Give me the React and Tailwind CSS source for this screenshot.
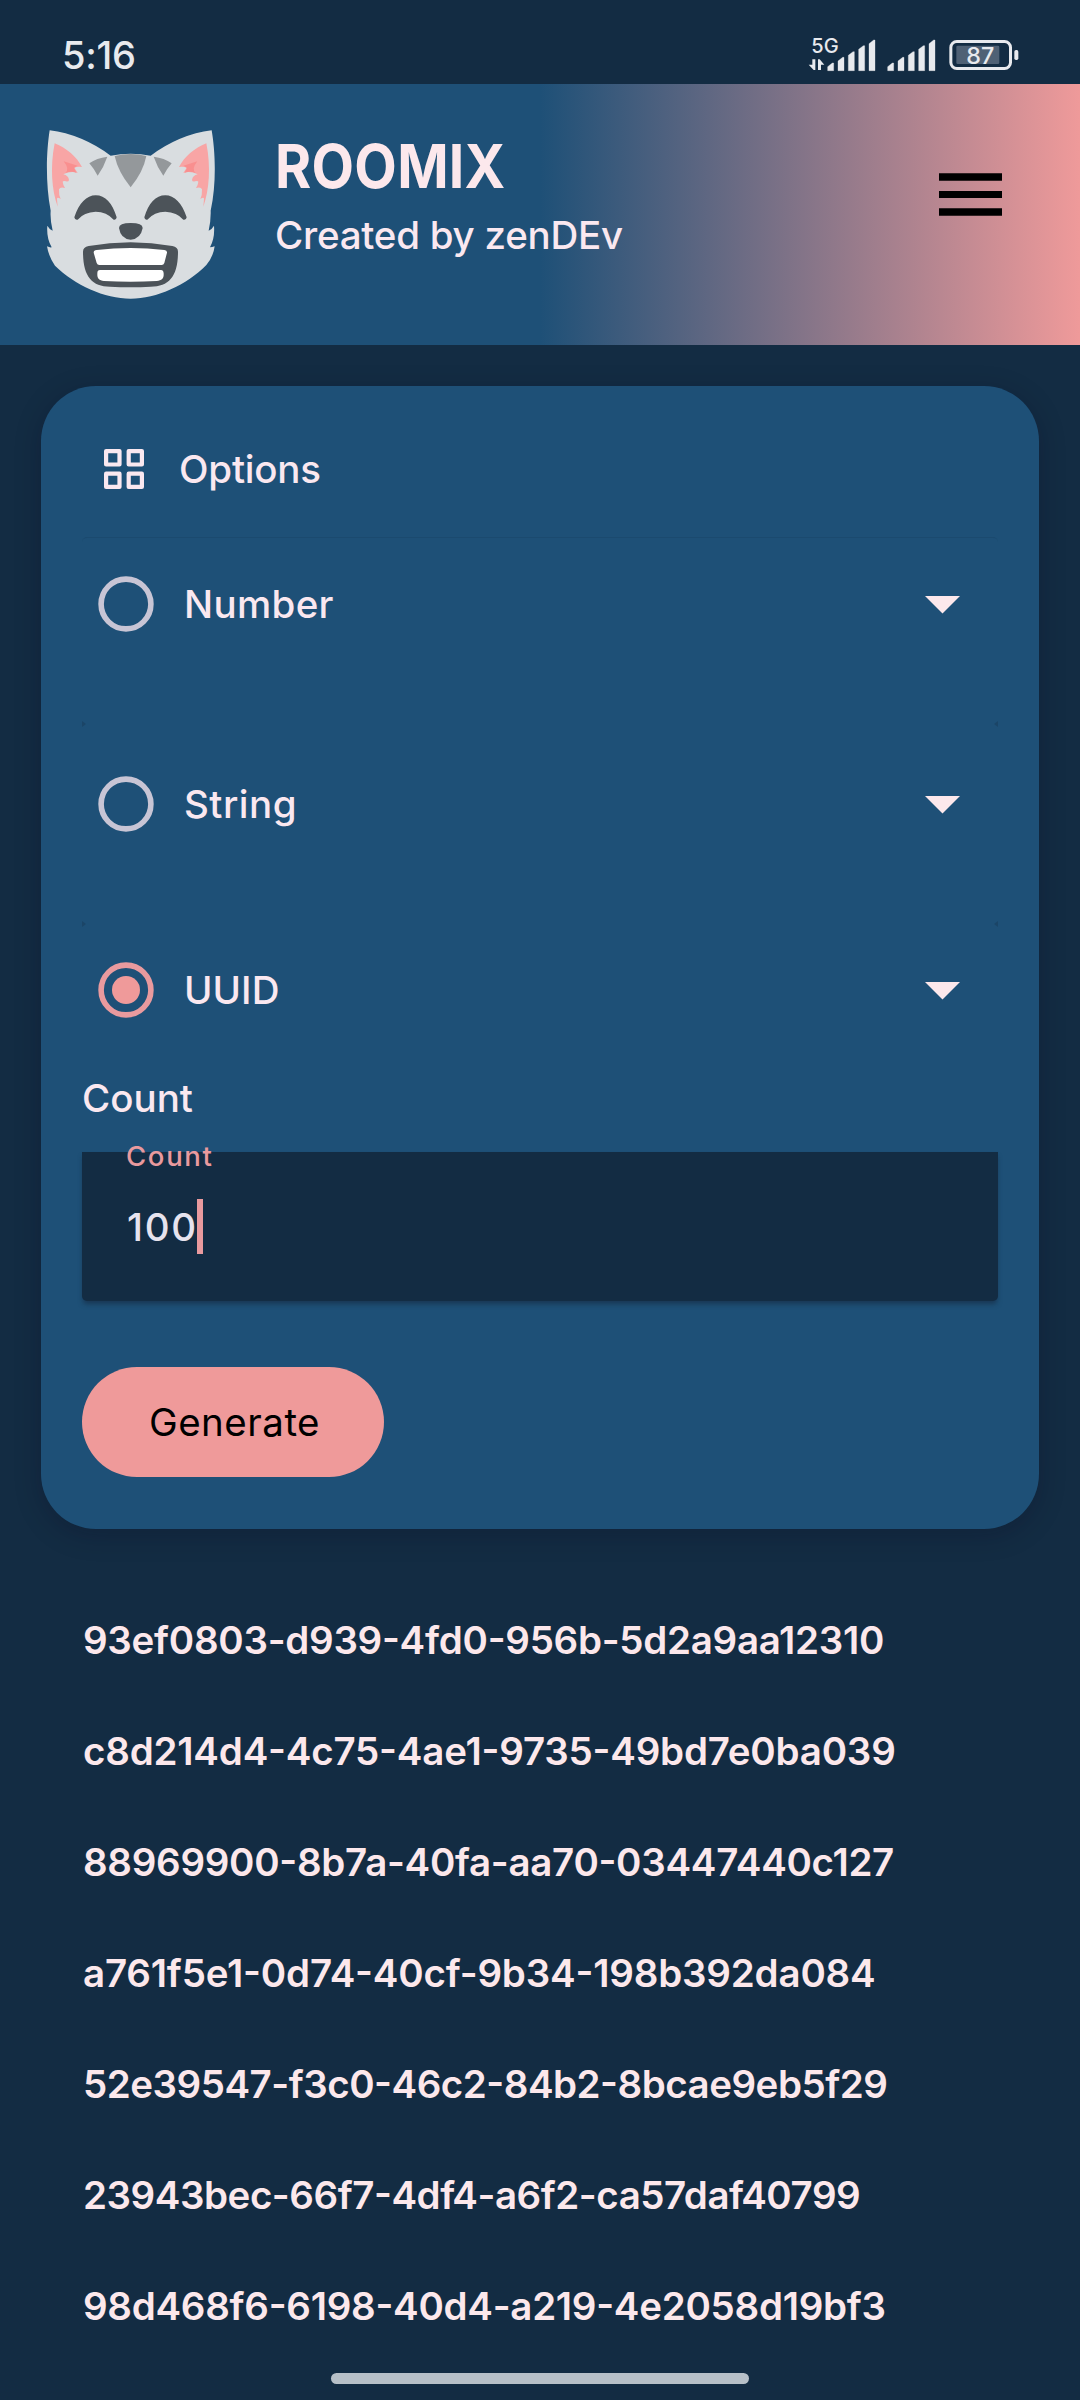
import React from "react";

const results = [
  { id: "93ef0803-d939-4fd0-956b-5d2a9aa12310", tracking: "tracking-[-0.27px]" },
  { id: "c8d214d4-4c75-4ae1-9735-49bd7e0ba039", tracking: "tracking-[-0.2px]" },
  { id: "88969900-8b7a-40fa-aa70-03447440c127", tracking: "tracking-[-0.29px]" },
  { id: "a761f5e1-0d74-40cf-9b34-198b392da084", tracking: "tracking-[-0.18px]" },
  { id: "52e39547-f3c0-46c2-84b2-8bcae9eb5f29", tracking: "tracking-[-0.48px]" },
  { id: "23943bec-66f7-4df4-a6f2-ca57daf40799", tracking: "tracking-[-0.45px]" },
  { id: "98d468f6-6198-40d4-a219-4e2058d19bf3", tracking: "tracking-[-0.27px]" },
];

function SignalBars({ x }) {
  const tops = [129, 112, 95, 77, 60];
  return tops.map((top, i) => (
    <path
      key={top}
      d={`M${x + i * 31} ${top + 11} L${x + 14 + i * 31} ${top} H${x + 18 + i * 31} V152 H${x + i * 31} Z`}
      fill="#e8eaee"
      stroke="#e8eaee"
      strokeWidth="1"
      strokeLinejoin="round"
    />
  ));
}

function StatusIcons() {
  return (
    <svg width="213" height="44" viewBox="140 27 639 132" className="block">
      <text x="153" y="98" fontSize="61" fontWeight="500" fill="#e8eaee" textLength="82" lengthAdjust="spacingAndGlyphs">5G</text>
      <path d="M156 118 H165 V150 H160 L145 134 H156 Z" fill="#e8eaee" />
      <path d="M173 118 H178 L192 134 H182 V150 H173 Z" fill="#e8eaee" />
      <SignalBars x={202} />
      <SignalBars x={382} />
      <rect x="571.5" y="64.5" width="179" height="81" rx="18" fill="none" stroke="#e8eaee" strokeWidth="9" />
      <rect x="588" y="77" width="129" height="55" rx="4" fill="#4f6175" />
      <rect x="762" y="90" width="12" height="30" rx="5" fill="#e8eaee" />
      <text x="618" y="131" fontSize="67" fontWeight="500" fill="#e8eaee" textLength="84" lengthAdjust="spacingAndGlyphs">87</text>
    </svg>
  );
}

function CatEar() {
  return (
    <>
      <path d="M164 430 C200 445 230 470 246 501 Q232 499 223 503 L233 519 Q212 512 190 523 Q205 526 207 540 Q206 546 198 544 Q190 541 188 545 Q189 555 195 564 Q180 560 177 568 Q176 585 182 597 Q171 590 171 597 L173 620 C155 570 150 500 164 430 Z" fill="#f8a5a5" />
      <path d="M191 484 L233 497 Q222 502 222 504 L229 518 Q214 512 196 519 Q210 508 191 484 Z" fill="#f98f8f" />
      <path d="M268 490 Q290 474 322 470 Q312 500 293 527 Q282 506 268 490 Z" fill="#94989b" />
      <path d="M223 652 C237 609 260 586 287 586 C316 586 337 609 350 652 Q349 661 341 659 Q320 635 287 635 Q252 636 233 659 Q224 661 223 652 Z" fill="#4c5359" />
    </>
  );
}

function CatLogo() {
  return (
    <svg width="172" height="172" viewBox="138 387 516 516" className="block shrink-0">
      <path
        d="M149 391 Q245 403 332 467 Q392 456 452 467 Q539 403 635 391 C646 455 650 550 632 632 Q633 660 626 692 Q636 688 642 677 Q645 715 630 742 Q636 742 644 739 Q640 770 619 795 C560 855 470 896 392 896 C314 896 224 855 165 797 Q146 770 141 739 Q149 743 155 742 Q139 715 142 677 Q148 688 158 692 Q150 660 152 632 C136 550 139 455 149 391 Z"
        fill="#d9dde0"
      />
      <CatEar />
      <g transform="translate(783 0) scale(-1 1)">
        <CatEar />
      </g>
      <path d="M344 468 Q392 456 439 468 Q430 515 392 562 Q354 515 344 468 Z" fill="#94989b" />
      <path d="M357 684 Q357 669 392 669 Q428 669 428 684 Q422 717 392 719 Q362 717 357 684 Z" fill="#4c5359" />
      <path d="M249 755 Q249 741 266 738 Q392 716 517 738 Q534 741 534 755 C534 828 508 860 452 860 Q392 863 330 860 C275 860 249 828 249 755 Z" fill="#4c5359" />
      <path d="M281 758 Q281 751 290 750 Q392 738 493 750 Q502 751 501 758 L493 789 Q491 795 485 795 H298 Q292 795 290 789 Z" fill="#fff" />
      <path d="M292 820 Q292 810 300 810 H483 Q490 810 491 820 C492 837 485 841 470 843 Q392 847 312 843 C298 841 291 837 292 820 Z" fill="#fff" />
    </svg>
  );
}

function MenuIcon() {
  return (
    <svg width="63" height="43" viewBox="0 0 63 43" className="block">
      <path d="M0 .3H63V7.7H0Z M0 18H63V25H0Z M0 35.3H63V42.7H0Z" fill="#000" />
    </svg>
  );
}

function GridIcon() {
  return (
    <svg width="40" height="40" viewBox="0 0 40 40" fill="none" stroke="#fae8f0" strokeWidth="4.2" strokeLinejoin="round" className="block">
      <rect x="2.1" y="2.1" width="13.4" height="13.4" />
      <rect x="24.7" y="2.1" width="13.2" height="13.4" />
      <rect x="2.1" y="24.7" width="13.4" height="13.2" />
      <rect x="24.7" y="24.7" width="13.2" height="13.2" />
    </svg>
  );
}

function Radio({ selected }) {
  return (
    <svg width="56" height="56" viewBox="0 0 56 56" className="block shrink-0">
      <circle cx="28" cy="28" r="24.9" fill="none" stroke={selected ? "#e99a9e" : "#c8c5d5"} strokeWidth="5.6" />
      {selected && <circle cx="28" cy="28" r="14" fill="#ef9a9a" />}
    </svg>
  );
}

function OptionRow({ label, selected, className }) {
  return (
    <div className={`flex items-center pl-4 pr-[38px] ${className}`}>
      <Radio selected={selected} />
      <span className="ml-[30px] flex-1">{label}</span>
      <svg width="35" height="18" viewBox="0 0 35 18" className="mt-[2px] block">
        <path d="M0 0 H35 L17.5 17.5 Z" fill="#fce8ec" />
      </svg>
    </div>
  );
}

function SectionSeam() {
  return (
    <div className="flex h-0 items-center justify-between">
      <svg width="4" height="6" viewBox="0 0 4 6"><path d="M0 0 L4 3 L0 6 Z" fill="#1b4567" /></svg>
      <svg width="4" height="6" viewBox="0 0 4 6"><path d="M4 0 L0 3 L4 6 Z" fill="#1b4567" /></svg>
    </div>
  );
}

export default function App() {
  return (
    <div className="flex h-[2400px] w-[1080px] flex-col overflow-hidden bg-[#132c43] font-['Inter',sans-serif] text-[38.5px] leading-10 font-medium text-[#fae8f0]">
      <div className="flex h-[84px] shrink-0 items-start justify-between pr-[60px] pl-[62px]">
        <span className="mt-[35px] text-[38px] tracking-[-0.26px] text-[#e8eaee]">5:16</span>
        <div className="mt-[29px]">
          <StatusIcons />
        </div>
      </div>

      <header className="flex h-[261px] shrink-0 items-start bg-[linear-gradient(90deg,#1e5077_50%,#ef9a9a_100%)] pt-[45px] pr-[78px] pl-[46px]">
        <CatLogo />
        <div className="mt-[7px] ml-[57px] flex-1">
          <h1 className="origin-left scale-x-[0.92] text-[60px] leading-[60px] font-bold tracking-[0.3px] text-[#fce8ec]">ROOMIX</h1>
          <p className="mt-[19px] tracking-[-0.24px]">Created by zenDEv</p>
        </div>
        <button className="mt-11" aria-label="Menu">
          <MenuIcon />
        </button>
      </header>

      <main className="pt-[41px]">
        <section className="mx-[41px] h-[1143px] rounded-[55px] bg-[#1e5077] px-[41px] pt-[41px] shadow-[0_6px_26px_rgba(10,8,30,0.25)]">
          <div className="flex h-[84px] items-center gap-[35px] pl-[22px]">
            <GridIcon />
            <span className="tracking-[-0.2px]">Options</span>
          </div>
          <div className="mt-[26px] rounded-t-[5px] border-t border-[#1b4a6f]">
            <OptionRow label="Number" className="-mt-px h-[134px] tracking-[0.34px]" />
          </div>
          <div className="h-[53px]" />
          <SectionSeam />
          <OptionRow label="String" className="h-[160px] tracking-[0.5px]" />
          <div className="h-10" />
          <SectionSeam />
          <OptionRow label="UUID" selected className="h-[132px] tracking-[0.05px]" />
          <div className="mt-[22px]">Count</div>
          <div className="relative mt-[34px] flex h-[149px] items-center rounded-b-[5px] bg-[#132c43] pl-[45px] shadow-[0_4px_5px_-1px_rgba(20,35,55,0.55)]">
            <span className="absolute -top-[10px] left-[44px] text-[27.5px] leading-7 tracking-[1.68px] text-[#e99a9e]">Count</span>
            <span className="tracking-[1.7px] text-[#e6e3ee]">100</span>
            <span className="-ml-px h-[55px] w-[6px] bg-[#e99a9e]" />
          </div>
          <button className="mt-[66px] flex h-[110px] w-[302px] items-center justify-center rounded-full bg-[#ef9a9a] pl-[3px] font-normal tracking-[0.5px] text-black">
            Generate
          </button>
        </section>

        <ul className="mt-[55px] pl-[83px] font-semibold text-[#fce8ec] [font-feature-settings:'calt'_1]">
          {results.map(({ id, tracking }) => (
            <li key={id} className={`flex h-[111px] items-center whitespace-nowrap ${tracking}`}>{id}</li>
          ))}
        </ul>
      </main>

      <div className="mx-auto mt-[12px] h-[11px] w-[418px] shrink-0 rounded-full bg-[#b7c0c8]" />
    </div>
  );
}
